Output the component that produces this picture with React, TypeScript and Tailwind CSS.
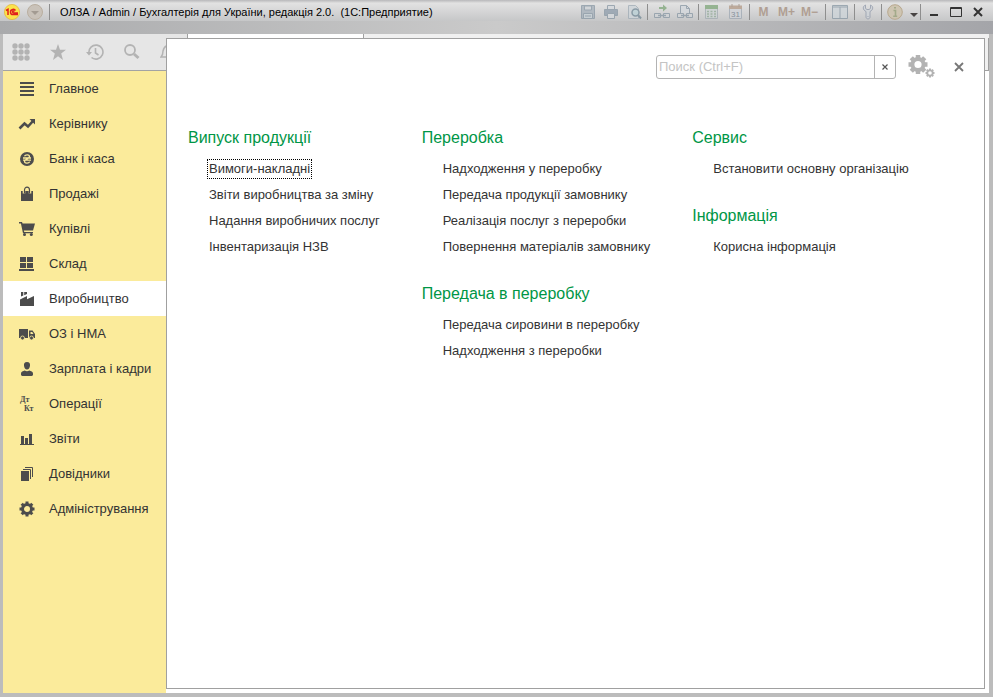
import React from 'react';
import clsx from 'clsx';

interface MenuSection {
    title: string;
    items: string[];
}

interface NavEntry {
    label: string;
    icon: React.ReactNode;
    active?: boolean;
}

const Gear: React.FC<{ cx: number; cy: number; r: number; hole: number; tooth: number }> = ({ cx, cy, r, hole, tooth }) => (
    <g>
        <circle cx={cx} cy={cy} r={(r * 0.8 + hole) / 2} fill="none" stroke="currentColor" strokeWidth={r * 0.8 - hole} />
        {[0, 45, 90, 135, 180, 225, 270, 315].map((angle) => (
            <rect
                key={angle}
                x={cx - tooth / 2}
                y={cy - r}
                width={tooth}
                height={r * 0.35}
                fill="currentColor"
                transform={`rotate(${angle} ${cx} ${cy})`}
            />
        ))}
    </g>
);

const navEntries: NavEntry[] = [
    { label: 'Главное', icon: <path d="M1 1h14v2H1zM1 5h14v2H1zM1 9h14v2H1zM1 13h14v2H1z" /> },
    {
        label: 'Керівнику',
        icon: (
            <>
                <path d="M.5 12.5 5.5 7.5 9 10.5 14 5" fill="none" stroke="currentColor" strokeWidth="2.6" />
                <path d="M10.5 3H16v5.5z" />
            </>
        ),
    },
    {
        label: 'Банк і каса',
        icon: (
            <>
                <circle cx="8" cy="8" r="7" />
                <path
                    d="M5.5 5.2C6.3 3.4 10.5 3.3 10.5 5.6c0 2.2-5 2.300-5 4.700 0 2.400 4.100 2.500 5.200.5M4 7h8M4 9.200h8"
                    fill="none"
                    stroke="#fbeb9b"
                    strokeWidth="1.3"
                />
            </>
        ),
    },
    {
        label: 'Продажі',
        icon: (
            <>
                <path d="M2 5h12v10H2z" />
                <path d="M5 7.500V4C5-.3 11-.3 11 4v3.500" fill="none" stroke="#fbeb9b" strokeWidth="2.6" />
                <path d="M5.500 7.500V4C5.500.1 10.500.1 10.500 4v3.500" fill="none" stroke="currentColor" strokeWidth="1.2" />
            </>
        ),
    },
    {
        label: 'Купівлі',
        icon: (
            <>
                <path d="M0 1h3l.6 1.500H16L14 9.500H4.800L5.300 11H14v1.200H4L1.900 2.400H0z" />
                <circle cx="5.500" cy="13.500" r="1.500" />
                <circle cx="12.300" cy="13.500" r="1.500" />
            </>
        ),
    },
    { label: 'Склад', icon: <path d="M1 1h6v5H1zM8 1h6v5H8zM1 7h6v5H1zM8 7h6v5H8zM0 13h15v2H0z" /> },
    {
        label: 'Виробництво',
        active: true,
        icon: <path d="M2 1h2.300v3.500L2 5.600zM5.200 1H8v2L5.200 4.200zM1 15V8.500L8 5v3.300L15 5v10z" />,
    },
    {
        label: 'ОЗ і НМА',
        icon: (
            <>
                <path d="M0 3h9v9H0zM10 4.500h3.600L16 8v4h-6z" />
                <path d="M11.500 6h1.700l1.300 2h-3z" fill="#fbeb9b" />
                <circle cx="3.500" cy="12" r="2" stroke="#fbeb9b" strokeWidth=".8" />
                <circle cx="12.500" cy="12" r="2" stroke="#fbeb9b" strokeWidth=".8" />
            </>
        ),
    },
    {
        label: 'Зарплата і кадри',
        icon: <path d="M8 1c2.400 0 3.300 1.600 3 3.800C10.700 7 9.700 8.500 8 8.500S5.300 7 5 4.800C4.700 2.600 5.600 1 8 1zM2 14v-1.600C2 10.600 4 10 5.800 9.400c1.200 1 3.200 1 4.400 0C12 10 14 10.600 14 12.400V14c-.5.700-1 1-2 1H4c-1 0-1.500-.3-2-1z" />,
    },
    {
        label: 'Операції',
        icon: (
            <g className="font-['Liberation_Serif',serif] text-[8px] font-bold">
                <text x="1" y="6">Дт</text>
                <text x="5" y="15">Кт</text>
            </g>
        ),
    },
    { label: 'Звіти', icon: <path d="M2 5h3v8H2zM6 7h3v6H6zM10 3h3v10h-3zM1 13h14v1H1z" /> },
    {
        label: 'Довідники',
        icon: (
            <>
                <path d="M2 5h8v10H2z" />
                <path d="M4 3.500h7.500V13M6 1.500h7.500V11" fill="none" stroke="currentColor" />
            </>
        ),
    },
    { label: 'Адміністрування', icon: <Gear cx={8} cy={8} r={7.5} hole={3} tooth={3} /> },
];

const columns: MenuSection[][] = [
    [
        {
            title: 'Випуск продукції',
            items: ['Вимоги-накладні', 'Звіти виробництва за зміну', 'Надання виробничих послуг', 'Інвентаризація НЗВ'],
        },
    ],
    [
        {
            title: 'Переробка',
            items: [
                'Надходження у переробку',
                'Передача продукції замовнику',
                'Реалізація послуг з переробки',
                'Повернення матеріалів замовнику',
            ],
        },
        { title: 'Передача в переробку', items: ['Передача сировини в переробку', 'Надходження з переробки'] },
    ],
    [
        { title: 'Сервис', items: ['Встановити основну організацію'] },
        { title: 'Інформація', items: ['Корисна інформація'] },
    ],
];

const TitleButton: React.FC<{ label: string; className?: string; children: React.ReactNode }> = ({ label, className, children }) => (
    <button type="button" aria-label={label} className={clsx('flex h-5 shrink-0 items-center justify-center', className ?? 'w-[23px]')}>
        {children}
    </button>
);

const Separator = () => <span className="h-4 w-px shrink-0 bg-[#8e8e8e]" />;

const Glyph: React.FC<{ children: React.ReactNode }> = ({ children }) => (
    <svg viewBox="0 0 16 16" className="h-4 w-4 opacity-75" fill="none" stroke="#8796a3">
        {children}
    </svg>
);

const TitleBar = () => (
    <header className="flex h-[21px] items-center bg-linear-to-b from-[#b8b8ba] via-[#e2e2e2] via-15% to-[#c6c7c8] pt-[3px] pr-1 pl-1">
        <svg viewBox="0 0 16 16" className="mr-[7px] h-4 w-4 shrink-0" aria-label="1С">
            <circle cx="8" cy="8" r="7.600" fill="#fbe34b" stroke="#e5b93e" strokeWidth=".8" />
            <path d="M2 6.500 4 5.300V11M11.500 6.500C10.500 4.600 6.500 5 6.500 8c0 1.800 1.200 2.600 2.500 2.600h5M10.500 7.300C9.500 6.600 8.600 7.100 8.600 8c0 .6.500.9 1.200.9H14" fill="none" stroke="#e0211d" strokeWidth="1.500" />
        </svg>
        <button type="button" aria-label="Меню" className="mr-1.5 shrink-0">
            <svg viewBox="0 0 16 16" className="h-4 w-4">
                <circle cx="8" cy="8" r="7.500" fill="#c9c2b9" stroke="#b9ae9f" />
                <path d="M4 7h8l-4 4z" fill="#a39b92" />
            </svg>
        </button>
        <Separator />
        <h1 className="ml-[10px] min-w-0 flex-1 truncate text-[11px] leading-4 whitespace-pre text-black">
            ОЛЗА / Admin / Бухгалтерія для України, редакція 2.0.{'  '}(1С:Предприятие)
        </h1>
        <div className="flex items-center pr-0.5">
            <TitleButton label="Зберегти">
                <Glyph>
                    <path d="M1.500 1.500h13v13h-13z" fill="#a5b0ba" />
                    <path d="M4.500 2h7v4h-7z" fill="#cfd4d8" />
                    <path d="M3.500 9.500h9v5h-9z" fill="#c6d0d6" />
                    <path d="M5 12h6" />
                </Glyph>
            </TitleButton>
            <TitleButton label="Друк">
                <Glyph>
                    <path d="M4.500 6V1.500h7V6" fill="#d6dade" />
                    <path d="M1.500 5.500h13v6h-13z" fill="#8d9cab" />
                    <path d="M4.500 9.500h7v5h-7z" fill="#d6dade" />
                </Glyph>
            </TitleButton>
            <TitleButton label="Попередній перегляд">
                <Glyph>
                    <path d="M2.500 1.500h7l3 3v10h-10z" fill="#ced5da" stroke="#9eabb5" />
                    <circle cx="9.500" cy="8.500" r="3.500" fill="#b9d0d6" stroke="#718896" strokeWidth="1.500" />
                    <path d="m12 11 3 3.500" stroke="#718896" strokeWidth="2" />
                </Glyph>
            </TitleButton>
        </div>
        <Separator />
        <div className="flex items-center px-0.5">
            <TitleButton label="Отримати посилання">
                <Glyph>
                    <path d="M5 3h4V.5L13 4 9 7.500V5H5z" fill="#7ea679" stroke="none" />
                    <path d="M.5 9.500h6v4h-6zM9.500 9.500h6v4h-6z" fill="#d0d3d6" />
                    <path d="M4 11.500h8" strokeWidth="1.500" />
                </Glyph>
            </TitleButton>
            <TitleButton label="Перейти за посиланням">
                <Glyph>
                    <path d="M3.500 9V1.500h6l3 3V9" fill="#d3d8dd" />
                    <path d="M9.500 1.500v3h3" />
                    <path d="M.5 9.500h6v4h-6zM9.500 9.500h6v4h-6z" fill="#d0d3d6" />
                    <path d="M4 11.500h8" strokeWidth="1.500" />
                </Glyph>
            </TitleButton>
        </div>
        <Separator />
        <div className="flex items-center pr-0.5">
            <TitleButton label="Калькулятор" className="w-6">
                <Glyph>
                    <path d="M2.500 1.500h12v13h-12z" fill="#ccd2d3" stroke="#a1abb1" />
                    <path d="M2 1h13v4H2z" fill="#7ea679" stroke="none" />
                    <path d="M4 7.500h9M4 10h9M4 12.500h9" stroke="#92ab97" strokeWidth="1.500" strokeDasharray="2 1.500" />
                </Glyph>
            </TitleButton>
            <TitleButton label="Календар" className="w-6">
                <Glyph>
                    <path d="M2.500 2.500h12v12h-12z" fill="#d0d3d8" stroke="#9ea8b3" />
                    <path d="M2 1.500h13V5H2z" fill="#b39a86" stroke="none" />
                    <path d="M5 0v3M12 0v3" stroke="#9d8c7e" />
                    <text x="8.500" y="13" textAnchor="middle" className="text-[8px]" fill="#6f7b88" stroke="none">31</text>
                </Glyph>
            </TitleButton>
        </div>
        <Separator />
        <div className="flex items-center pr-1 pl-0.5 text-[12px] font-bold text-[#b09f93]">
            <TitleButton label="M">M</TitleButton>
            <TitleButton label="M+">M+</TitleButton>
            <TitleButton label="M-">M−</TitleButton>
        </div>
        <Separator />
        <TitleButton label="Панелі" className="w-7">
            <Glyph>
                <path d="M.5 1.500h15v13H.5z" fill="#cdd4d9" />
                <path d="M.5 3h15M8 3v11.500" />
            </Glyph>
        </TitleButton>
        <Separator />
        <TitleButton label="Налаштування" className="w-[26px]">
            <Glyph>
                <path
                    d="M5.500 1C2.500 2 2.500 6 6 7.500v5.500c0 2.500 4 2.500 4 0V7.500C13.500 6 13.500 2 10.500 1v3.500L9 5.500H7L5.500 4.500zM8 12v1"
                    fill="#cfd4d9"
                    stroke="#8f98a9"
                />
            </Glyph>
        </TitleButton>
        <Separator />
        <TitleButton label="Довідка" className="w-[26px]">
            <svg viewBox="0 0 16 16" className="h-4 w-4">
                <circle cx="8" cy="8" r="7.300" fill="#cec5b2" stroke="#b8a88e" />
                <path d="M6.500 6.500h2V12M6.200 12.300h4M7 3.800h2" stroke="#a3aa8a" strokeWidth="1.600" fill="none" />
            </svg>
        </TitleButton>
        <TitleButton label="Ще" className="w-3">
            <svg viewBox="0 0 8 4" className="mt-1.5 h-1 w-2" fill="#484444">
                <path d="M0 0h8L4 4z" />
            </svg>
        </TitleButton>
        <Separator />
        <TitleButton label="Згорнути" className="ml-0.5 w-[22px]">
            <svg viewBox="0 0 12 12" className="h-3 w-3">
                <path d="M2 8h8v2H2z" fill="#333" />
            </svg>
        </TitleButton>
        <TitleButton label="Розгорнути" className="w-[22px]">
            <svg viewBox="0 0 12 12" className="h-3 w-3" fill="none" stroke="#333">
                <path d="M.5 1.500h11v9H.5zM.5 2.500h11" />
            </svg>
        </TitleButton>
        <TitleButton label="Закрити" className="w-[22px]">
            <svg viewBox="0 0 12 12" className="h-3 w-3" stroke="#333" strokeWidth="2">
                <path d="m2 2 8 8M10 2l-8 8" />
            </svg>
        </TitleButton>
    </header>
);

const QuickBar = () => (
    <div className="flex h-[37px] shrink-0 items-center gap-5 overflow-hidden border-b border-[#a3a3a3] bg-[#e6e6e6] pl-[9px] text-[#b3b3b3]">
        <button type="button" aria-label="Меню функцій" className="shrink-0">
            <svg viewBox="0 0 18 18" className="h-[18px] w-[18px]" fill="currentColor">
                {[3, 9, 15].map((y) => [3, 9, 15].map((x) => <circle key={`${x}-${y}`} cx={x} cy={y} r="2.700" />))}
            </svg>
        </button>
        <button type="button" aria-label="Вибране" className="shrink-0">
            <svg viewBox="0 0 16 16" className="h-4 w-4" fill="currentColor">
                <path d="m8 0 2 5.800h6l-4.800 3.700L13 16l-5-3.800L3 16l1.800-6.500L0 5.800h6z" />
            </svg>
        </button>
        <button type="button" aria-label="Історія" className="shrink-0">
            <svg viewBox="0 0 18 16" className="h-4 w-[18px]" fill="none" stroke="currentColor" strokeWidth="1.600">
                <path d="M3 9a7 7 0 1 1 2.500 4.500M9.500 4v5l3 2" />
                <path d="M0 8h6l-3 3.500z" fill="currentColor" stroke="none" />
            </svg>
        </button>
        <button type="button" aria-label="Пошук" className="shrink-0">
            <svg viewBox="0 0 16 16" className="h-4 w-4" fill="none" stroke="currentColor">
                <circle cx="6" cy="6" r="5" strokeWidth="1.800" />
                <path d="m10 10 4.500 4" strokeWidth="3" />
            </svg>
        </button>
        <button type="button" aria-label="Сповіщення" className="shrink-0">
            <svg viewBox="0 0 16 16" className="h-4 w-4" fill="none" stroke="currentColor" strokeWidth="1.500">
                <path d="M1 13h14c-2-2-2-3-2-6 0-6-8-8-10 0 0 3 0 4-2 6z" />
            </svg>
        </button>
    </div>
);

const Sidebar = () => (
    <aside className="flex w-[163px] shrink-0 flex-col bg-[#fbeb9b]">
        <QuickBar />
        <nav>
            {navEntries.map(({ label, icon, active }) => (
                <a
                    key={label}
                    href="#"
                    className={clsx(
                        'flex h-[35px] items-center gap-3.5 pt-px pl-4 text-[13px] leading-5 whitespace-nowrap text-[#333]',
                        active && 'bg-white',
                    )}
                >
                    <svg viewBox="0 0 16 16" className="h-4 w-4 shrink-0 overflow-visible text-[#4c4c4c]" fill="currentColor">
                        {icon}
                    </svg>
                    {label}
                </a>
            ))}
        </nav>
    </aside>
);

const SearchRow = () => (
    <div className="flex h-[56px] items-center justify-end pr-[15px]">
        <div className="flex h-6 w-60 rounded-[3px] border border-[#b3b3b3] bg-white">
            <input
                type="text"
                aria-label="Поиск"
                placeholder="Поиск (Ctrl+F)"
                className="min-w-0 flex-1 px-0.5 text-[13px] outline-none placeholder:text-[#c4c4c4]"
            />
            <button type="button" aria-label="Очистити" className="flex w-[21px] items-center justify-center border-l border-[#b3b3b3]">
                <svg viewBox="0 0 8 8" className="h-2 w-2" stroke="#555" strokeWidth="1.200">
                    <path d="m1.500 1.500 5 5M6.500 1.500l-5 5" />
                </svg>
            </button>
        </div>
        <button type="button" aria-label="Налаштування панелі" className="ml-3 text-[#b3b3b3]">
            <svg viewBox="0 0 28 24" className="h-6 w-7">
                <Gear cx={10} cy={9.5} r={9.5} hole={3.6} tooth={4.5} />
                <Gear cx={22} cy={18} r={4.5} hole={1.8} tooth={2} />
            </svg>
        </button>
        <button type="button" aria-label="Закрити панель" className="ml-[13px] flex h-5 w-5 items-center justify-center">
            <svg viewBox="0 0 10 10" className="h-[10px] w-[10px]" stroke="#777" strokeWidth="1.800">
                <path d="m1 1 8 8M9 1 1 9" />
            </svg>
        </button>
    </div>
);

const FunctionPanel = () => (
    <section className="flex-1 border border-[#a0a0a0] bg-white">
        <SearchRow />
        <div className="flex gap-10 pt-[30px] pl-[21px] whitespace-nowrap">
            {columns.map((sections) => (
                <div key={sections[0].title} className="flex flex-col gap-[21px]">
                    {sections.map(({ title, items }) => (
                        <div key={title}>
                            <h2 className="mb-[5px] text-[16px] leading-[26px] text-[#009646]">{title}</h2>
                            <ul className="pl-[19px]">
                                {items.map((item) => (
                                    <li key={item} className="flex h-[26px] items-center">
                                        <a
                                            href="#"
                                            className={clsx(
                                                'border border-dotted px-px text-[13px] leading-[18px] text-[#333]',
                                                item === 'Вимоги-накладні' ? 'border-black' : 'border-transparent',
                                            )}
                                        >
                                            {item}
                                        </a>
                                    </li>
                                ))}
                            </ul>
                        </div>
                    ))}
                </div>
            ))}
        </div>
    </section>
);

const App: React.FC = () => {
    return (
        <div className="flex min-h-screen flex-col bg-[#bcbcbc] font-['Liberation_Sans',Arial,sans-serif]">
            <TitleBar />
            <div className="h-[13px] bg-linear-to-r from-[#a9aaac] via-[#cacaca] to-[#a4a5a9]" />
            <main className="mr-1 mb-1 ml-[3px] flex flex-1 bg-white">
                <Sidebar />
                <div className="flex min-w-0 flex-1 flex-col">
                    <div className="flex h-1 bg-[#f0f0f0]">
                        <span className="w-[22px] border-r border-[#a0a0a0] bg-[#e6e6e6]" />
                        <span className="w-44 border-r border-[#a0a0a0] bg-white" />
                    </div>
                    <div className="flex flex-1 pb-1">
                        <FunctionPanel />
                        <div className="h-[33px] w-1 border-r border-b border-[#a0a0a0] bg-[#f0f0f0]" />
                    </div>
                </div>
            </main>
        </div>
    );
};

export default App;
